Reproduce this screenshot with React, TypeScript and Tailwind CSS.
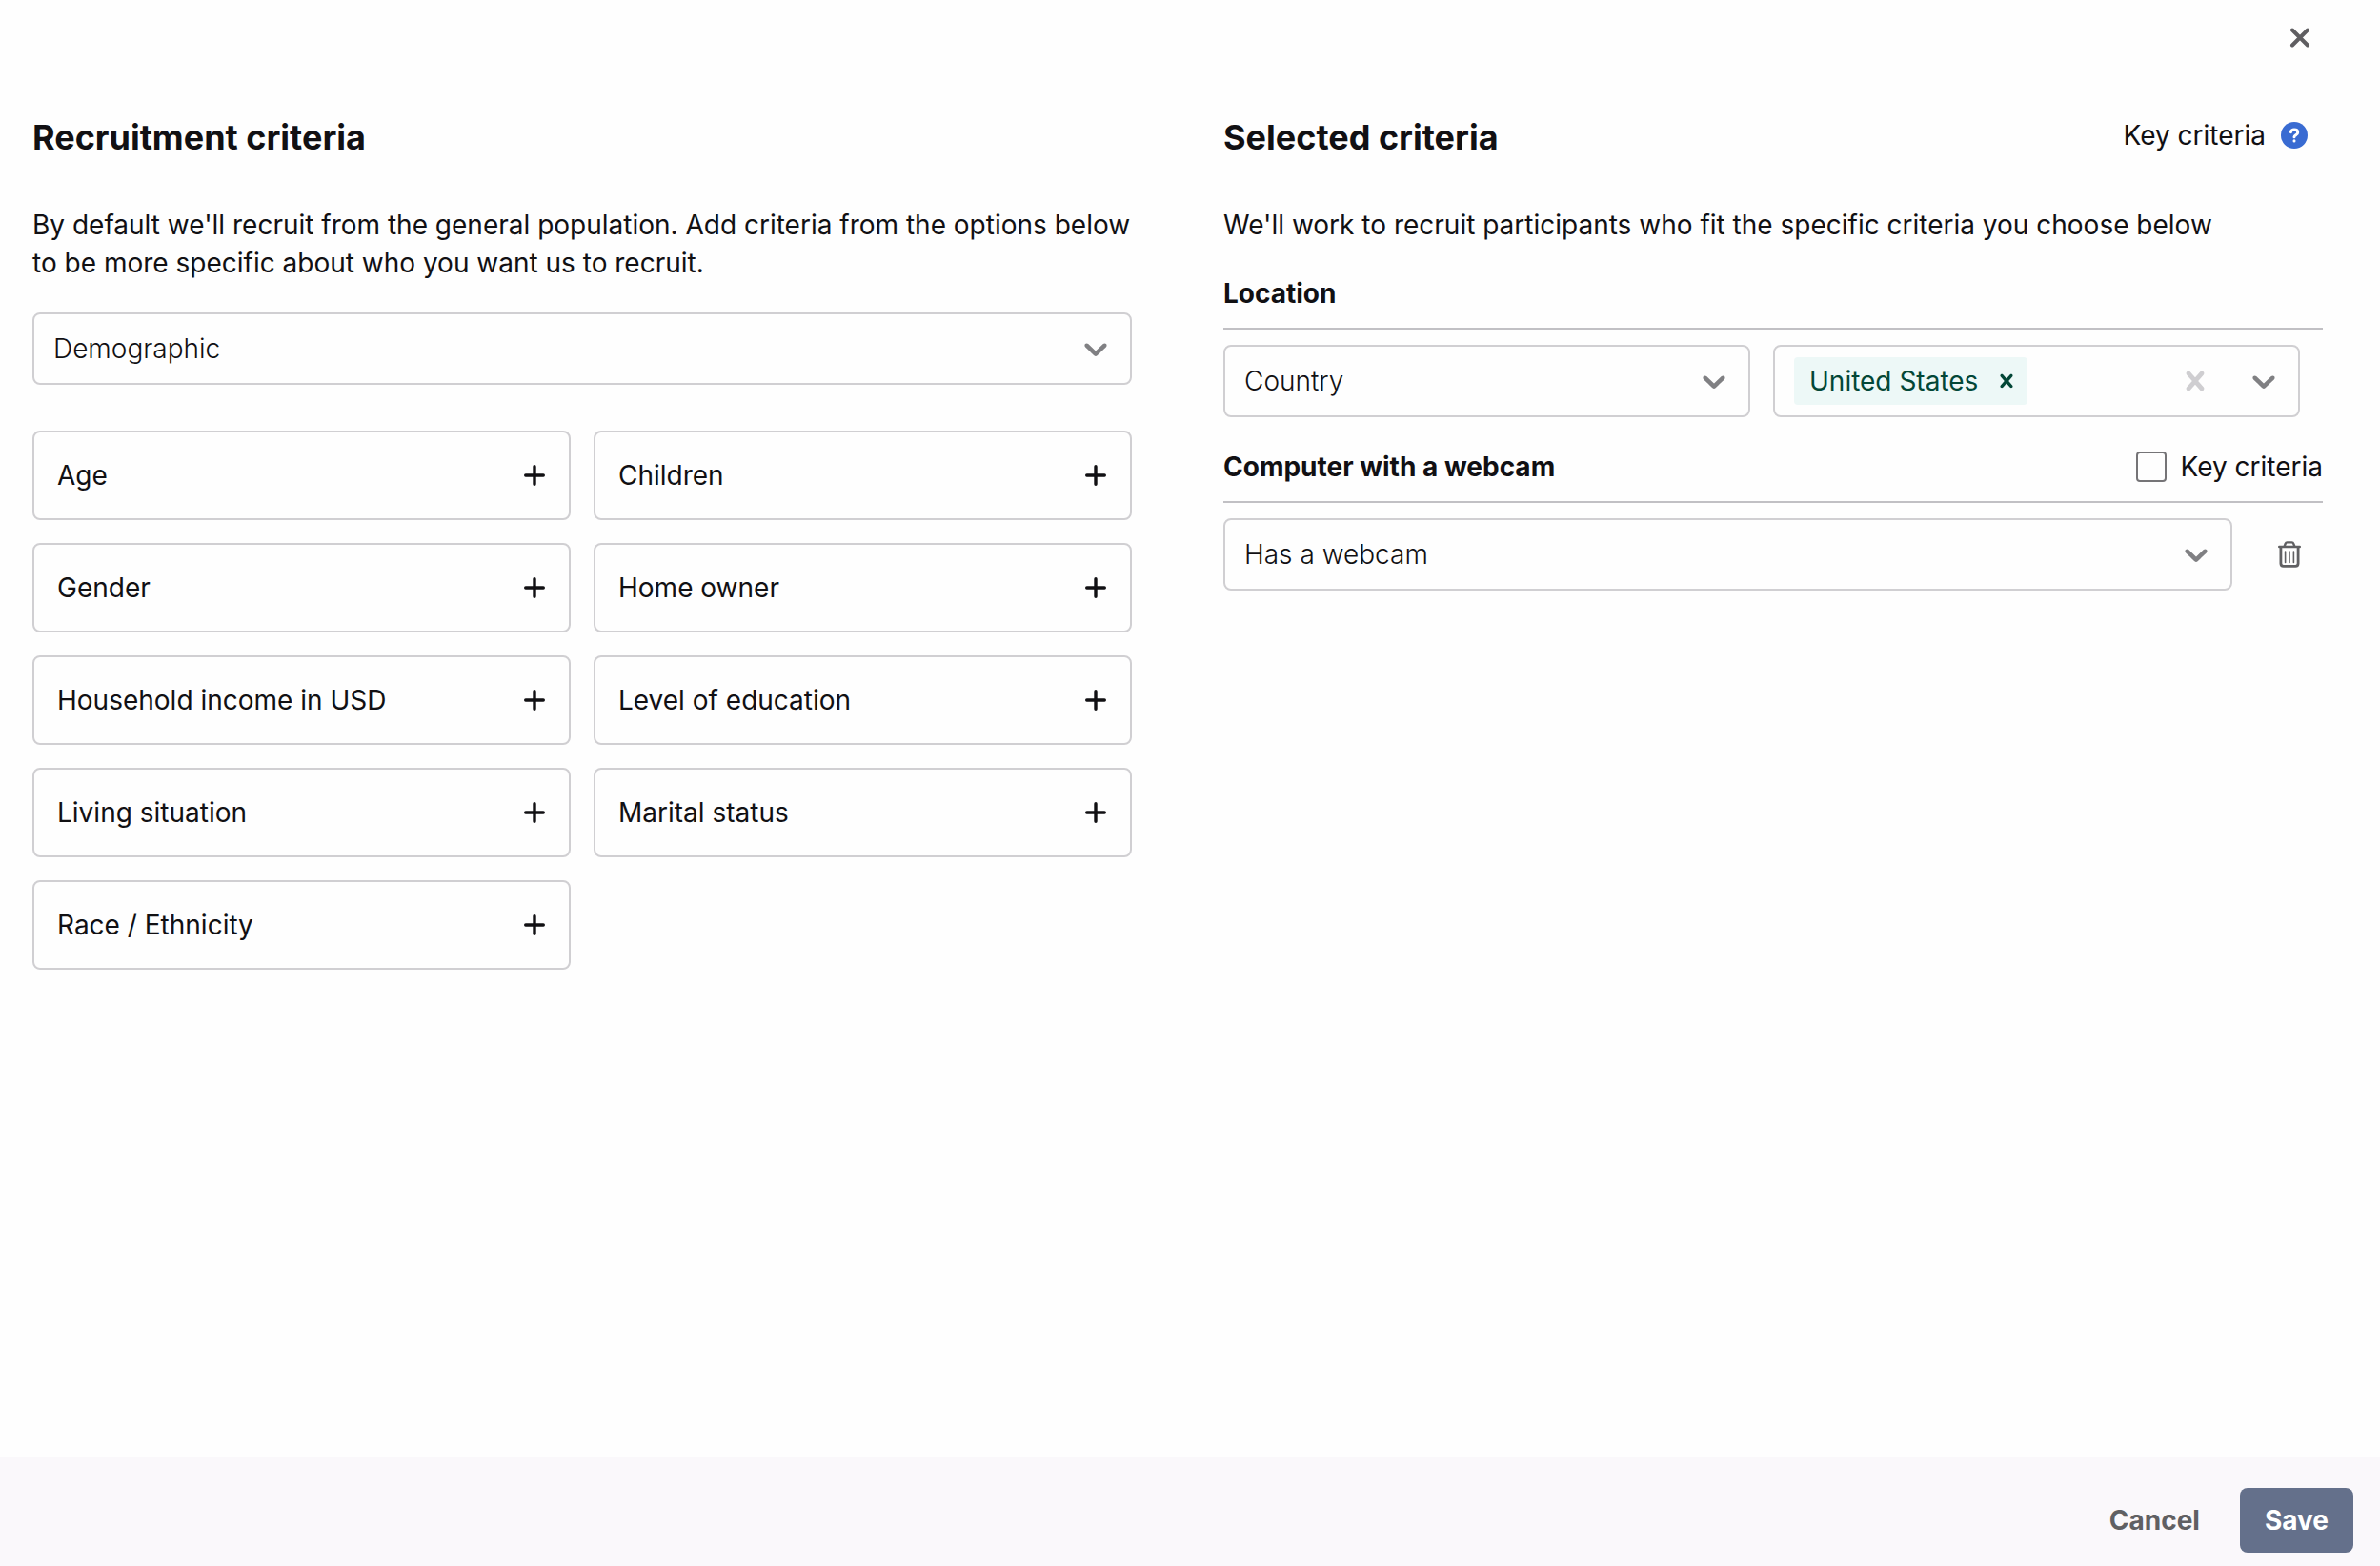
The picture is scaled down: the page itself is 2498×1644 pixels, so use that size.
import { useState } from "react";
import type { ReactNode } from "react";

const demographicOptions = [
  "Age",
  "Children",
  "Gender",
  "Home owner",
  "Household income in USD",
  "Level of education",
  "Living situation",
  "Marital status",
  "Race / Ethnicity",
];

function ChevronIcon({ className }: { className?: string }) {
  return (
    <svg viewBox="0 0 20 20" className={`size-10 shrink-0 fill-[#808083] ${className ?? ""}`} aria-hidden="true">
      <path d="M4.516 7.548c0.436-0.446 1.043-0.481 1.576 0l3.908 3.747 3.908-3.747c0.533-0.481 1.141-0.446 1.574 0 0.436 0.445 0.408 1.197 0 1.615-0.406 0.418-4.695 4.502-4.695 4.502-0.217 0.223-0.502 0.335-0.787 0.335s-0.57-0.112-0.789-0.335c0 0-4.287-4.084-4.695-4.502s-0.436-1.17 0-1.615z" />
    </svg>
  );
}

function CrossIcon({ className }: { className: string }) {
  return (
    <svg viewBox="0 0 20 20" className={className} aria-hidden="true">
      <path d="M14.348 14.849c-0.469 0.469-1.229 0.469-1.697 0l-2.651-3.030-2.651 3.029c-0.469 0.469-1.229 0.469-1.697 0-0.469-0.469-0.469-1.229 0-1.697l2.758-3.15-2.759-3.152c-0.469-0.469-0.469-1.228 0-1.697s1.228-0.469 1.697 0l2.652 3.031 2.651-3.031c0.469-0.469 1.228-0.469 1.697 0s0.469 1.229 0 1.697l-2.758 3.152 2.758 3.15c0.469 0.469 0.469 1.229 0 1.698z" />
    </svg>
  );
}

function PlusIcon() {
  return (
    <svg viewBox="0 0 22 22" className="size-[22px] shrink-0" fill="none" stroke="currentColor" strokeWidth="3.4" strokeLinecap="round" aria-hidden="true">
      <path d="M11 1.7v18.6M1.7 11h18.6" />
    </svg>
  );
}

function TrashIcon() {
  return (
    <svg viewBox="0 0 24 28" className="h-7 w-6" fill="none" stroke="#606063" strokeLinecap="round" strokeLinejoin="round" aria-hidden="true">
      <path strokeWidth="2.4" d="M1.2 6h21.6" />
      <path strokeWidth="2.4" d="M6.6 5.6l1.1-2.8c.3-.8.9-1.4 1.8-1.4h5c.9 0 1.5.6 1.8 1.4l1.1 2.8" />
      <path strokeWidth="2.8" d="M2.9 6.4v17.2c0 1.7 1.1 2.8 2.8 2.8h12.6c1.7 0 2.8-1.1 2.8-2.8V6.4" />
      <path strokeWidth="1.6" d="M7.6 11v11.4M12 11v11.4M16.4 11v11.4" />
    </svg>
  );
}

function Select({ label, value }: { label: string; value: string }) {
  return (
    <div className="relative min-w-0 flex-1">
      <select
        aria-label={label}
        defaultValue={value}
        className="block h-[76px] w-full appearance-none rounded-lg border-2 border-[#d0cfd2] bg-transparent px-5 font-light"
      >
        <option>{value}</option>
      </select>
      <ChevronIcon className="pointer-events-none absolute top-[18px] right-[18px]" />
    </div>
  );
}

function SectionHeader({ title, children }: { title: string; children?: ReactNode }) {
  return (
    <div className="mt-8 flex items-center justify-between border-b-2 border-[#c1c0c4] pb-4">
      <h3 className="font-bold">{title}</h3>
      {children}
    </div>
  );
}

export default function App() {
  const [keyCriteria, setKeyCriteria] = useState(false);

  return (
    <div className="flex min-h-screen flex-col bg-[#fefefe] font-['Inter',sans-serif] text-[28px] leading-10 text-[#111013]">
      <div className="flex h-20 items-center justify-end pr-[73px]">
        <button type="button" aria-label="Close" className="flex size-[22px] items-center justify-center">
          <svg viewBox="0 0 22 22" className="size-[22px]" fill="none" stroke="#5f5e61" strokeWidth="4" strokeLinecap="round" aria-hidden="true">
            <path d="M3 2.5l16 16M19 2.5l-16 16" />
          </svg>
        </button>
      </div>

      <main className="grid flex-1 grid-cols-2 items-start gap-24 pt-10 pr-[60px] pb-10 pl-[34px]">
        <section>
          <h2 className="text-[36px] leading-[48px] font-bold">Recruitment criteria</h2>
          <p className="mt-12">
            By default we'll recruit from the general population. Add criteria from the options below to be more
            specific about who you want us to recruit.
          </p>
          <div className="mt-8 flex">
            <Select label="Criteria category" value="Demographic" />
          </div>
          <div className="mt-12 grid grid-cols-2 gap-6">
            {demographicOptions.map((option) => (
              <button
                key={option}
                type="button"
                className="flex h-[94px] items-center justify-between rounded-lg border-2 border-[#d0cfd2] pr-[25px] pl-6 text-left"
              >
                {option}
                <PlusIcon />
              </button>
            ))}
          </div>
        </section>

        <section>
          <div className="flex items-center justify-between pr-4">
            <h2 className="text-[36px] leading-[48px] font-bold">Selected criteria</h2>
            <div className="flex items-center gap-4 pb-1">
              <span>Key criteria</span>
              <button type="button" aria-label="About key criteria" className="size-7 rounded-full bg-[#396bd2]">
                <svg viewBox="0 0 28 28" className="size-7" fill="none" stroke="#fff" strokeWidth="3" strokeLinecap="round" strokeLinejoin="round" aria-hidden="true">
                  <path d="M10.4 10.6c.4-1.7 1.7-2.6 3.6-2.6 2.2 0 3.7 1.1 3.7 2.9 0 1.3-.7 2-1.8 2.7-1.2.7-1.9 1.1-1.9 2.2" />
                  <path d="M14 19.8v.1" />
                </svg>
              </button>
            </div>
          </div>
          <p className="mt-12">We'll work to recruit participants who fit the specific criteria you choose below</p>

          <SectionHeader title="Location" />
          <div className="mt-4 grid grid-cols-2 gap-6 pr-6">
            <Select label="Location type" value="Country" />
            <div className="flex h-[76px] min-w-0 items-center justify-between rounded-lg border-2 border-[#d0cfd2] pr-4 pl-5">
              <div className="flex h-[50px] items-center gap-4 rounded bg-[#edf8f7] pr-2 pl-4 text-[#034737]">
                United States
                <button type="button" aria-label="Remove United States">
                  <CrossIcon className="size-7 fill-current" />
                </button>
              </div>
              <div className="flex items-center gap-8">
                <button type="button" aria-label="Clear countries">
                  <CrossIcon className="size-10 fill-[#cfced1]" />
                </button>
                <button type="button" aria-label="Show countries">
                  <ChevronIcon />
                </button>
              </div>
            </div>
          </div>

          <SectionHeader title="Computer with a webcam">
            <label className="flex items-center gap-[14px]">
              <input
                type="checkbox"
                checked={keyCriteria}
                onChange={(event) => setKeyCriteria(event.target.checked)}
                className="size-8 appearance-none rounded border-2 border-[#757477] checked:bg-[#396bd2]"
              />
              Key criteria
            </label>
          </SectionHeader>
          <div className="mt-4 flex items-center gap-12 pr-[23px]">
            <Select label="Webcam" value="Has a webcam" />
            <button type="button" aria-label="Delete webcam criterion">
              <TrashIcon />
            </button>
          </div>
        </section>
      </main>

      <footer className="flex items-center justify-end gap-[42px] bg-[#faf8fb] pt-8 pr-7 pb-[14px] font-bold">
        <button type="button" className="text-[#606063]">
          Cancel
        </button>
        <button type="button" className="h-[68px] rounded-lg bg-[#64708b] px-[26px] text-white">
          Save
        </button>
      </footer>
    </div>
  );
}
